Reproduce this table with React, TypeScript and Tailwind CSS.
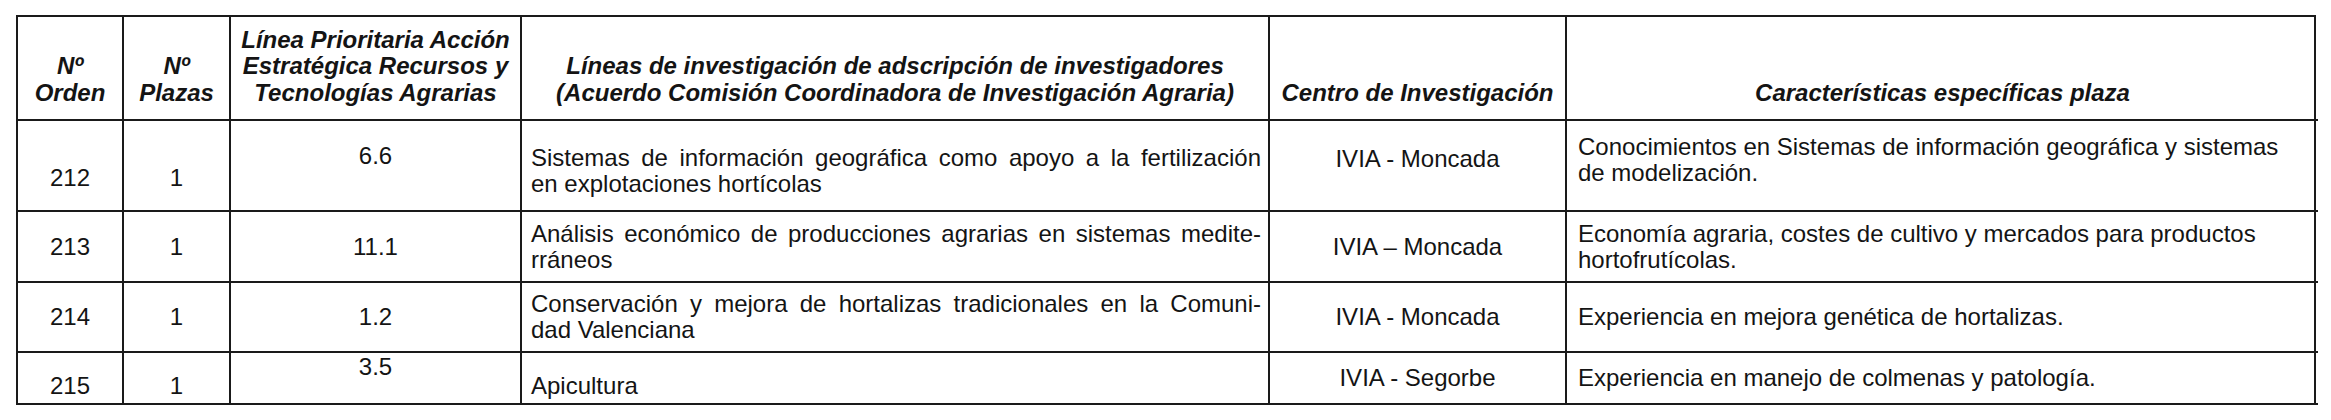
const rows = [
  {
    orden: "212",
    plazas: "1",
    linea: "6.6",
    inv: ["Sistemas de información geográfica como apoyo a la fertilización", "en explotaciones hortícolas"],
    centro: "IVIA - Moncada",
    car: ["Conocimientos en Sistemas de información geográfica y sistemas", "de modelización."],
  },
  {
    orden: "213",
    plazas: "1",
    linea: "11.1",
    inv: ["Análisis económico de producciones agrarias en sistemas medite-", "rráneos"],
    centro: "IVIA – Moncada",
    car: ["Economía agraria, costes de cultivo y mercados para productos", "hortofrutícolas."],
  },
  {
    orden: "214",
    plazas: "1",
    linea: "1.2",
    inv: ["Conservación y mejora de hortalizas tradicionales en la Comuni-", "dad Valenciana"],
    centro: "IVIA - Moncada",
    car: ["Experiencia en mejora genética de hortalizas."],
  },
  {
    orden: "215",
    plazas: "1",
    linea: "3.5",
    inv: ["Apicultura"],
    centro: "IVIA - Segorbe",
    car: ["Experiencia en manejo de colmenas y patología."],
  },
];

const heights = ["h-[91px]", "h-[71px]", "h-[70px]", "h-[52px]"];

// per-row vertical placement of each column
const place = [
  {
    num: "items-end pb-[19px]",
    lin: "items-center pb-[20px]",
    inv: "justify-end pb-[13px]",
    cen: "items-center pb-[14px]",
    car: "justify-center pb-[12px]",
  },
  { num: "items-center", lin: "items-center", inv: "justify-center", cen: "items-center", car: "justify-center" },
  { num: "items-center", lin: "items-center", inv: "justify-center", cen: "items-center", car: "justify-center" },
  {
    num: "items-end pb-[4px]",
    lin: "items-start pt-[1px]",
    inv: "justify-end pb-[4px]",
    cen: "items-center",
    car: "justify-center",
  },
];

function Head({ children, last }: { children: React.ReactNode; last?: boolean }) {
  return (
    <div
      className={`flex flex-col items-center justify-end pb-[13px] text-center font-bold italic leading-[26.5px] border-b-2 border-[#1a1a1a] ${
        last ? "" : "border-r-2"
      }`}
    >
      {children}
    </div>
  );
}

export default function App() {
  return (
    <div className="w-[2331px] h-[420px] bg-white text-[#141414] font-['Liberation_Sans',Arial,sans-serif] text-[24px]">
      <div className="pt-[15px] pl-[16px]">
        <div className="grid grid-cols-[106px_107px_291px_748px_297px_751px] w-[2300px] border-l-2 border-t-2 border-r-2 border-[#1a1a1a]">
          <div className="h-[104px] grid grid-cols-subgrid col-span-6">
            <Head>
              <span>Nº</span>
              <span>Orden</span>
            </Head>
            <Head>
              <span>Nº</span>
              <span>Plazas</span>
            </Head>
            <Head>
              <span>Línea Prioritaria Acción</span>
              <span>Estratégica Recursos y</span>
              <span>Tecnologías Agrarias</span>
            </Head>
            <Head>
              <span>Líneas de investigación de adscripción de investigadores</span>
              <span>(Acuerdo Comisión Coordinadora de Investigación Agraria)</span>
            </Head>
            <Head>
              <span>Centro de Investigación</span>
            </Head>
            <Head last>
              <span>Características específicas plaza</span>
            </Head>
          </div>
          {rows.map((r, i) => (
            <div
              key={r.orden}
              className={`grid grid-cols-subgrid col-span-6 ${heights[i]} border-b-2 border-[#1a1a1a] leading-[26px]`}
            >
              <div className={`flex justify-center border-r-2 border-[#1a1a1a] ${place[i].num}`}>{r.orden}</div>
              <div className={`flex justify-center border-r-2 border-[#1a1a1a] ${place[i].num}`}>{r.plazas}</div>
              <div className={`flex justify-center border-r-2 border-[#1a1a1a] ${place[i].lin}`}>{r.linea}</div>
              <div className={`flex flex-col pl-[9px] pr-[7px] border-r-2 border-[#1a1a1a] ${place[i].inv}`}>
                {r.inv.map((l, j) =>
                  j === 0 && r.inv.length > 1 ? (
                    <span key={j} className="block text-justify [text-align-last:justify]">
                      {l}
                    </span>
                  ) : (
                    <span key={j} className="block">
                      {l}
                    </span>
                  )
                )}
              </div>
              <div className={`flex justify-center border-r-2 border-[#1a1a1a] ${place[i].cen}`}>{r.centro}</div>
              <div className={`flex flex-col pl-[11px] pr-[8px] ${place[i].car}`}>
                {r.car.map((l, j) => (
                  <span key={j} className="block">
                    {l}
                  </span>
                ))}
              </div>
            </div>
          ))}
        </div>
      </div>
    </div>
  );
}
